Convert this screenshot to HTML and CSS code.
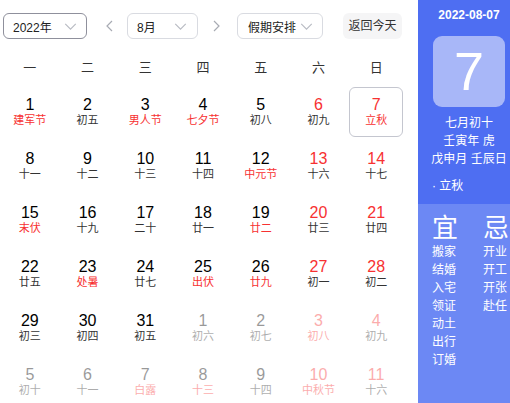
FILE: index.html
```html
<!DOCTYPE html>
<html lang="zh-CN">
<head>
<meta charset="utf-8">
<title>万年历</title>
<link rel="stylesheet" href="styles.css">
</head>
<body>
<div class="app">
  <div class="main">
    <div class="toolbar">
      <div class="select select-year"><span>2022年</span><svg class="chev" viewBox="0 0 14 8"><polyline points="1,1 7,7 13,1"/></svg></div>
      <div class="arrow arrow-prev"><svg viewBox="0 0 7 12"><polyline points="6,1 1,6 6,11"/></svg></div>
      <div class="select select-month"><span>8月</span><svg class="chev" viewBox="0 0 14 8"><polyline points="1,1 7,7 13,1"/></svg></div>
      <div class="arrow arrow-next"><svg viewBox="0 0 7 12"><polyline points="1,1 6,6 1,11"/></svg></div>
      <div class="select select-holiday"><span>假期安排</span><svg class="chev" viewBox="0 0 14 8"><polyline points="1,1 7,7 13,1"/></svg></div>
      <div class="today-btn">返回今天</div>
    </div>
    <div class="weekdays">
      <div>一</div><div>二</div><div>三</div><div>四</div><div>五</div><div>六</div><div>日</div>
    </div>
    <div class="grid">
      <div class="cell"><div class="box"><div class="num">1</div><div class="lunar fest">建军节</div></div></div>
      <div class="cell"><div class="box"><div class="num">2</div><div class="lunar">初五</div></div></div>
      <div class="cell"><div class="box"><div class="num">3</div><div class="lunar fest">男人节</div></div></div>
      <div class="cell"><div class="box"><div class="num">4</div><div class="lunar fest">七夕节</div></div></div>
      <div class="cell"><div class="box"><div class="num">5</div><div class="lunar">初八</div></div></div>
      <div class="cell"><div class="box"><div class="num red">6</div><div class="lunar">初九</div></div></div>
      <div class="cell"><div class="box selected"><div class="num red">7</div><div class="lunar fest">立秋</div></div></div>

      <div class="cell"><div class="box"><div class="num">8</div><div class="lunar">十一</div></div></div>
      <div class="cell"><div class="box"><div class="num">9</div><div class="lunar">十二</div></div></div>
      <div class="cell"><div class="box"><div class="num">10</div><div class="lunar">十三</div></div></div>
      <div class="cell"><div class="box"><div class="num">11</div><div class="lunar">十四</div></div></div>
      <div class="cell"><div class="box"><div class="num">12</div><div class="lunar fest">中元节</div></div></div>
      <div class="cell"><div class="box"><div class="num red">13</div><div class="lunar">十六</div></div></div>
      <div class="cell"><div class="box"><div class="num red">14</div><div class="lunar">十七</div></div></div>

      <div class="cell"><div class="box"><div class="num">15</div><div class="lunar fest">末伏</div></div></div>
      <div class="cell"><div class="box"><div class="num">16</div><div class="lunar">十九</div></div></div>
      <div class="cell"><div class="box"><div class="num">17</div><div class="lunar">二十</div></div></div>
      <div class="cell"><div class="box"><div class="num">18</div><div class="lunar">廿一</div></div></div>
      <div class="cell"><div class="box"><div class="num">19</div><div class="lunar fest">廿二</div></div></div>
      <div class="cell"><div class="box"><div class="num red">20</div><div class="lunar">廿三</div></div></div>
      <div class="cell"><div class="box"><div class="num red">21</div><div class="lunar">廿四</div></div></div>

      <div class="cell"><div class="box"><div class="num">22</div><div class="lunar">廿五</div></div></div>
      <div class="cell"><div class="box"><div class="num">23</div><div class="lunar fest">处暑</div></div></div>
      <div class="cell"><div class="box"><div class="num">24</div><div class="lunar">廿七</div></div></div>
      <div class="cell"><div class="box"><div class="num">25</div><div class="lunar fest">出伏</div></div></div>
      <div class="cell"><div class="box"><div class="num">26</div><div class="lunar fest">廿九</div></div></div>
      <div class="cell"><div class="box"><div class="num red">27</div><div class="lunar">初一</div></div></div>
      <div class="cell"><div class="box"><div class="num red">28</div><div class="lunar">初二</div></div></div>

      <div class="cell"><div class="box"><div class="num">29</div><div class="lunar">初三</div></div></div>
      <div class="cell"><div class="box"><div class="num">30</div><div class="lunar">初四</div></div></div>
      <div class="cell"><div class="box"><div class="num">31</div><div class="lunar">初五</div></div></div>
      <div class="cell other"><div class="box"><div class="num">1</div><div class="lunar">初六</div></div></div>
      <div class="cell other"><div class="box"><div class="num">2</div><div class="lunar">初七</div></div></div>
      <div class="cell other"><div class="box"><div class="num red">3</div><div class="lunar fest">初八</div></div></div>
      <div class="cell other"><div class="box"><div class="num red">4</div><div class="lunar">初九</div></div></div>

      <div class="cell other"><div class="box"><div class="num">5</div><div class="lunar">初十</div></div></div>
      <div class="cell other"><div class="box"><div class="num">6</div><div class="lunar">十一</div></div></div>
      <div class="cell other"><div class="box"><div class="num">7</div><div class="lunar fest">白露</div></div></div>
      <div class="cell other"><div class="box"><div class="num">8</div><div class="lunar fest">十三</div></div></div>
      <div class="cell other"><div class="box"><div class="num">9</div><div class="lunar">十四</div></div></div>
      <div class="cell other"><div class="box"><div class="num red">10</div><div class="lunar fest">中秋节</div></div></div>
      <div class="cell other"><div class="box"><div class="num red">11</div><div class="lunar">十六</div></div></div>
    </div>
  </div>
  <div class="side">
    <div class="side-top">
      <div class="side-date">2022-08-07</div>
      <div class="side-day">7</div>
      <div class="side-line">七月初十</div>
      <div class="side-line">壬寅年 虎</div>
      <div class="side-line">戊申月 壬辰日</div>
      <div class="side-term">· 立秋</div>
    </div>
    <div class="side-bottom">
      <div class="yj-col">
        <div class="yj-title">宜</div>
        <div class="yj-item">搬家</div>
        <div class="yj-item">结婚</div>
        <div class="yj-item">入宅</div>
        <div class="yj-item">领证</div>
        <div class="yj-item">动土</div>
        <div class="yj-item">出行</div>
        <div class="yj-item">订婚</div>
      </div>
      <div class="yj-col">
        <div class="yj-title">忌</div>
        <div class="yj-item">开业</div>
        <div class="yj-item">开工</div>
        <div class="yj-item">开张</div>
        <div class="yj-item">赴任</div>
      </div>
    </div>
  </div>
</div>
</body>
</html>
```
FILE: styles.css
```css
html, body {
  margin: 0;
  padding: 0;
  background: #fff;
}
body {
  width: 510px;
  height: 403px;
  overflow: hidden;
  font-family: "Liberation Sans", "Noto Sans CJK SC", sans-serif;
  color: #333;
}
.app {
  display: flex;
  width: 510px;
  height: 403px;
}
.main {
  width: 418px;
  flex: none;
}
.toolbar {
  height: 51px;
  display: flex;
  align-items: center;
  padding-left: 3px;
  box-sizing: border-box;
  padding-top: 1px;
}
.select {
  height: 26px;
  box-sizing: border-box;
  border: 1px solid #d9dbe1;
  border-radius: 6px;
  display: flex;
  align-items: center;
  justify-content: space-between;
  padding: 0 9px 0 9px;
  font-size: 12px;
  color: #222;
}
.select-year {
  width: 84px;
  border-color: #8f909c;
}
.select-month {
  width: 71px;
  margin-left: 12px;
  padding-right: 10px;
}
.select-holiday {
  width: 86px;
  margin-left: 15px;
  padding-left: 10px;
}
.chev {
  width: 13px;
  height: 7px;
  fill: none;
  stroke: #b8bbc3;
  stroke-width: 1.3;
}
.arrow {
  width: 12px;
  height: 26px;
  display: flex;
  align-items: center;
  justify-content: center;
}
.arrow svg {
  width: 7px;
  height: 12px;
  fill: none;
  stroke: #a8abb3;
  stroke-width: 1.2;
}
.arrow-prev {
  margin-left: 16px;
}
.arrow-next {
  margin-left: 12px;
}
.today-btn {
  margin-left: 20px;
  width: 59px;
  height: 26px;
  line-height: 26px;
  text-align: center;
  background: #f5f5f6;
  border-radius: 6px;
  font-size: 12px;
  color: #333;
}
.weekdays {
  display: grid;
  grid-template-columns: repeat(7, 1fr);
  width: 404px;
  margin-left: 1px;
  height: 34px;
  line-height: 34px;
  text-align: center;
  font-size: 13px;
  color: #333;
}
.grid {
  display: grid;
  grid-template-columns: repeat(7, 1fr);
  grid-auto-rows: 54px;
  width: 404px;
  margin-left: 1px;
}
.cell {
  display: flex;
  align-items: center;
  justify-content: center;
}
.box {
  width: 54px;
  height: 50px;
  box-sizing: border-box;
  border: 1px solid transparent;
  border-radius: 6px;
  display: flex;
  flex-direction: column;
  align-items: center;
  justify-content: center;
}
.box.selected {
  border-color: #c4c6cf;
}
.num {
  font-size: 16px;
  line-height: 17px;
  color: #000;
  height: 17px;
}
.lunar {
  font-size: 11px;
  line-height: 15px;
  height: 15px;
  color: #333;
  white-space: nowrap;
}
.num.red,
.lunar.fest {
  color: #f73131;
}
.other .box {
  opacity: 0.4;
}
.side {
  width: 92px;
  flex: none;
  display: flex;
  flex-direction: column;
  color: #fff;
}
.side-top {
  background: #4e6ef2;
  height: 204px;
  padding-left: 10px;
  box-sizing: border-box;
  display: flex;
  flex-direction: column;
  align-items: center;
  padding-top: 7px;
}
.side-date {
  font-size: 12px;
  line-height: 16px;
  font-weight: bold;
  width: 82px;
  text-align: center;
}
.side-day {
  margin-top: 13px;
  width: 72px;
  height: 71px;
  border-radius: 9px;
  background: #a8b7f8;
  font-size: 54px;
  line-height: 71px;
  text-align: center;
  flex: none;
}
.side-line {
  font-size: 12px;
  line-height: 18px;
  white-space: nowrap;
  width: 82px;
  text-align: center;
}
.side-day + .side-line {
  margin-top: 7px;
}
.side-term {
  margin-top: 9px;
  font-size: 12px;
  line-height: 18px;
  align-self: flex-start;
  margin-left: 4px;
}
.side-bottom {
  flex: 1;
  background: #6c88f4;
  display: flex;
  padding-left: 14px;
  padding-top: 9px;
}
.yj-col {
  width: 51px;
  flex: none;
}
.yj-title {
  font-size: 26px;
  line-height: 30px;
}
.yj-item {
  font-size: 12px;
  line-height: 18px;
  white-space: nowrap;
}
```
